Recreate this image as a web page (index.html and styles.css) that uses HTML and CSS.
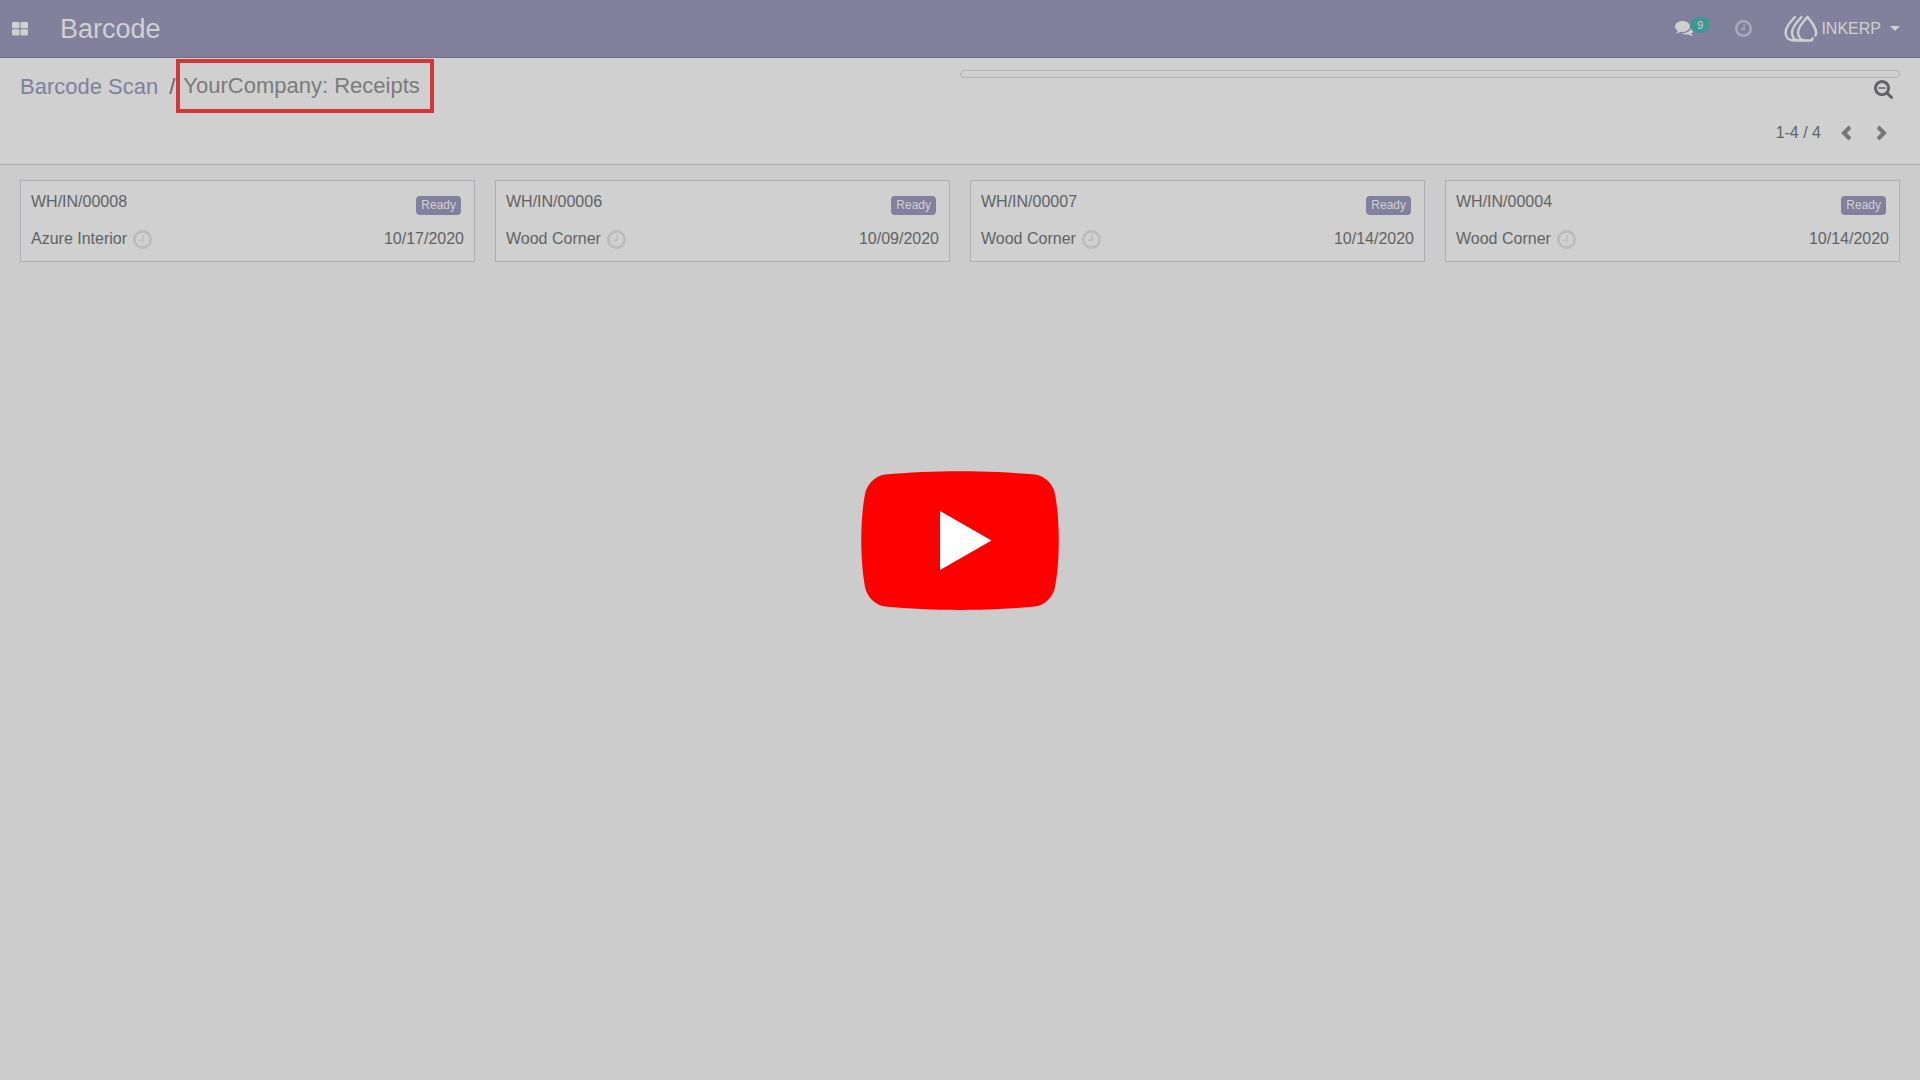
FILE: index.html
```html
<!DOCTYPE html>
<html lang="en">
<head>
<meta charset="utf-8">
<title>Barcode - YourCompany: Receipts</title>
<link rel="stylesheet" href="styles.css">
</head>
<body>
<svg class="defs" aria-hidden="true">
  <symbol id="clock" viewBox="0 128 1536 1536"><path d="M896 544v448q0 14-9 23t-23 9h-320q-14 0-23-9t-9-23v-64q0-14 9-23t23-9h224v-352q0-14 9-23t23-9h64q14 0 23 9t9 23zm416 352q0-148-73-273t-198-198-273-73-273 73-198 198-73 273 73 273 198 198 273 73 273-73 198-198 73-273zm224 0q0 209-103 385.5t-279.5 279.5-385.5 103-385.5-103-279.5-279.5-103-385.5 103-385.5 279.5-279.5 385.5-103 385.5 103 279.5 279.5 103 385.5z"/></symbol>
</svg>
<header class="navbar">
  <button class="icon-button apps" aria-label="Applications">
    <svg width="16" height="14" viewBox="0 0 16 14"><rect width="7.5" height="6.3" rx="1"/><rect x="8.5" width="7.5" height="6.3" rx="1"/><rect y="7.3" width="7.5" height="6.3" rx="1"/><rect x="8.5" y="7.3" width="7.5" height="6.3" rx="1"/></svg>
  </button>
  <a class="brand" href="#">Barcode</a>
  <nav class="systray" aria-label="User">
    <button class="icon-button messages" aria-label="Messages">
      <svg width="19" height="15" viewBox="0 256 1792 1408"><path d="M1408 768q0 139-94 257t-256.5 186.5-353.5 68.5q-86 0-176-16-124 88-278 128-36 9-86 16h-3q-11 0-20.500-8t-11.500-21q-1-3-1-6.500t.5-6.500 2-6l2.500-5 3.500-5.500 4-5 4.500-5 4-4.500q5-6 23-25t26-29.500 22.500-29 25-38.500 20.500-44q-124-72-195-177t-71-224q0-139 94-257t256.500-186.500 353.500-68.500 353.500 68.500 256.500 186.500 94 257zm384 256q0 120-71 224.500t-195 176.500q10 24 20.500 44t25 38.500 22.500 29 26 29.500 23 25q1 1 4 4.500t4.500 5 4 5 3.500 5.500l2.500 5 2 6 .5 6.500-1 6.500q-3 14-13 22t-22 7q-50-7-86-16-154-40-278-128-90 16-176 16-271 0-472-132 58 4 88 4 161 0 309-45t264-129q125-92 192-212t67-254q0-77-23-152 129 71 204 178t75 230z"/></svg>
      <span class="counter">9</span>
    </button>
    <button class="icon-button activities" aria-label="Activities"><svg width="17" height="17"><use href="#clock"/></svg></button>
    <button class="icon-button user">
      <svg class="logo" width="34" height="28" viewBox="0 0 34 28"><path d="M11 2C7 6 1.500 12 1.500 17.500C1.500 22.500 5 25.500 10 25.500H26.500Q28.500 25.500 28.500 23.500M17.500 2C13 7 8 12 8 17.500C8 22 10.500 25.500 15 25.500M31.500 20.500C34 15 28.500 8 23.500 2C19 7 14 12 14 17.500C14 22 17 25.500 22 25.500"/></svg>
      <span>INKERP</span>
      <svg width="10" height="5" viewBox="0 0 10 5"><path d="M0 0H10L5 5Z"/></svg>
    </button>
  </nav>
</header>
<section class="control-panel">
  <nav class="breadcrumb" aria-label="Breadcrumb">
    <a href="#">Barcode Scan</a>
    <span class="separator">/</span>
    <span class="current">YourCompany: Receipts</span>
  </nav>
  <div class="tools">
    <input class="search" type="search" aria-label="Search">
    <button class="icon-button filter" aria-label="Hide filters"><svg width="19" height="19" viewBox="0 64 1664 1664"><path d="M1024 736v64q0 13-9.500 22.500t-22.500 9.500h-576q-13 0-22.500-9.500t-9.500-22.500v-64q0-13 9.500-22.500t22.500-9.500h576q13 0 22.500 9.500t9.500 22.500zm128 32q0-185-131.500-316.500t-316.500-131.500-316.500 131.500-131.500 316.500 131.500 316.500 316.500 131.500 316.500-131.500 131.500-316.500zm512 832q0 53-37.500 90.500t-90.500 37.500q-54 0-90-38l-343-342q-179 124-399 124-143 0-273.500-55.500t-225-150-150-225-55.500-273.500 55.500-273.500 150-225 225-150 273.500-55.500 273.500 55.500 225 150 150 225 55.500 273.500q0 220-124 399l343 343q37 37 37 90z"/></svg></button>
    <div class="pager">
      <span>1-4 / 4</span>
      <button class="icon-button" aria-label="Previous"><svg class="chevron" width="11" height="16" viewBox="0 0 11 16"><path d="M9 2L3 8L9 14"/></svg></button>
      <button class="icon-button" aria-label="Next"><svg class="chevron" width="11" height="16" viewBox="0 0 11 16"><path d="M2 2L8 8L2 14"/></svg></button>
    </div>
  </div>
</section>
<main class="cards">
  <article class="card">
    <div class="row"><span>WH/IN/00008</span><span class="badge">Ready</span></div>
    <div class="row"><span class="partner">Azure Interior <svg width="19" height="19"><use href="#clock"/></svg></span><time>10/17/2020</time></div>
  </article>
  <article class="card">
    <div class="row"><span>WH/IN/00006</span><span class="badge">Ready</span></div>
    <div class="row"><span class="partner">Wood Corner <svg width="19" height="19"><use href="#clock"/></svg></span><time>10/09/2020</time></div>
  </article>
  <article class="card">
    <div class="row"><span>WH/IN/00007</span><span class="badge">Ready</span></div>
    <div class="row"><span class="partner">Wood Corner <svg width="19" height="19"><use href="#clock"/></svg></span><time>10/14/2020</time></div>
  </article>
  <article class="card">
    <div class="row"><span>WH/IN/00004</span><span class="badge">Ready</span></div>
    <div class="row"><span class="partner">Wood Corner <svg width="19" height="19"><use href="#clock"/></svg></span><time>10/14/2020</time></div>
  </article>
</main>
<button class="play" aria-label="Play video">
  <svg width="198" height="139" viewBox="0 0 198 139"><path fill="#f00" d="M24 3.500C70-1 128-1 174 3.500C184 5 192 13 194 23C199 50 199 89 194 116C192 126 184 134 174 135.500C128 140 70 140 24 135.500C14 134 6 126 4 116C-1 89-1 50 4 23C6 13 14 5 24 3.500Z"/><path fill="#fff" d="M79 40L130.500 69.500L79 99Z"/></svg>
</button>
</body>
</html>
```
FILE: styles.css
```css
* { box-sizing: border-box; }
body {
  margin: 0;
  min-height: 100vh;
  background: #ccc;
  color: #626365;
  font: 16px/24px "Liberation Sans", Arial, sans-serif;
}
a { color: inherit; text-decoration: none; }
svg { display: block; fill: currentColor; }
.defs { position: absolute; width: 0; height: 0; }
.icon-button {
  display: flex;
  align-items: center;
  padding: 0;
  border: 0;
  background: none;
  color: inherit;
  font: inherit;
}
.navbar {
  display: flex;
  align-items: center;
  height: 58px;
  padding: 0 20px 0 12px;
  border-bottom: 1px solid #706e8c;
  background: #82809c;
  color: #d0d0d0;
}
.brand { margin-left: 32px; font-size: 27px; line-height: 56px; }
.systray { display: flex; align-items: center; margin-left: auto; }
.messages { position: relative; }
.counter {
  position: absolute;
  left: 15px;
  top: -4px;
  width: 20px;
  border-radius: 8px;
  background: #419793;
  font-size: 11px;
  line-height: 16px;
  text-align: center;
}
.activities { margin: 0 32px 0 41px; color: #aaa9b9; }
.user { gap: 3px; }
.user svg:last-child { margin-left: 6px; }
.logo { fill: none; stroke: currentColor; stroke-width: 2.4; stroke-linecap: round; }
.control-panel {
  display: grid;
  grid-template-columns: 1fr 1fr;
  min-height: 107px;
  padding: 1px 20px 0;
  border-bottom: 1px solid #aeaeae;
  background: #d0d0d0;
}
.breadcrumb { display: flex; align-items: flex-start; font-size: 22px; line-height: 56px; }
.breadcrumb a { color: #82809c; }
.separator { padding: 0 1px 0 11px; }
.current {
  padding: 0 10px 0 3px;
  border: 4px solid #d23838;
  color: #7b7b7b;
  line-height: 46px;
}
.tools { display: flex; flex-direction: column; align-items: flex-end; padding-top: 11px; }
.search {
  width: 100%;
  height: 8px;
  padding: 0;
  border: 1px solid #b4b4b4;
  border-radius: 4px;
  background: transparent;
}
.filter { margin: 2px 7px 0 0; }
.pager { display: flex; align-items: center; margin: 22px 13px 0 0; }
.pager button { margin-left: 20px; color: #77787a; }
.pager button + button { margin-left: 24px; }
.chevron { fill: none; stroke: currentColor; stroke-width: 4; }
.cards {
  display: grid;
  grid-template-columns: repeat(4, 1fr);
  gap: 20px;
  padding: 15px 20px;
}
.card {
  display: grid;
  gap: 12px;
  padding: 9px 10px 10px;
  border: 1px solid #adafb6;
  background: #d0d0d0;
}
.row { display: flex; justify-content: space-between; }
.partner { display: flex; align-items: center; gap: 6px; }
.partner svg { color: #bcbcbd; }
.badge {
  margin: 6px 3px 0 0;
  padding: 0 5px;
  border-radius: 4px;
  background: #82809c;
  color: #d0d0d0;
  font-size: 12px;
  line-height: 19px;
}
.play {
  position: fixed;
  inset: 0;
  width: 198px;
  height: 139px;
  margin: auto;
  padding: 0;
  border: 0;
  background: none;
}
```
